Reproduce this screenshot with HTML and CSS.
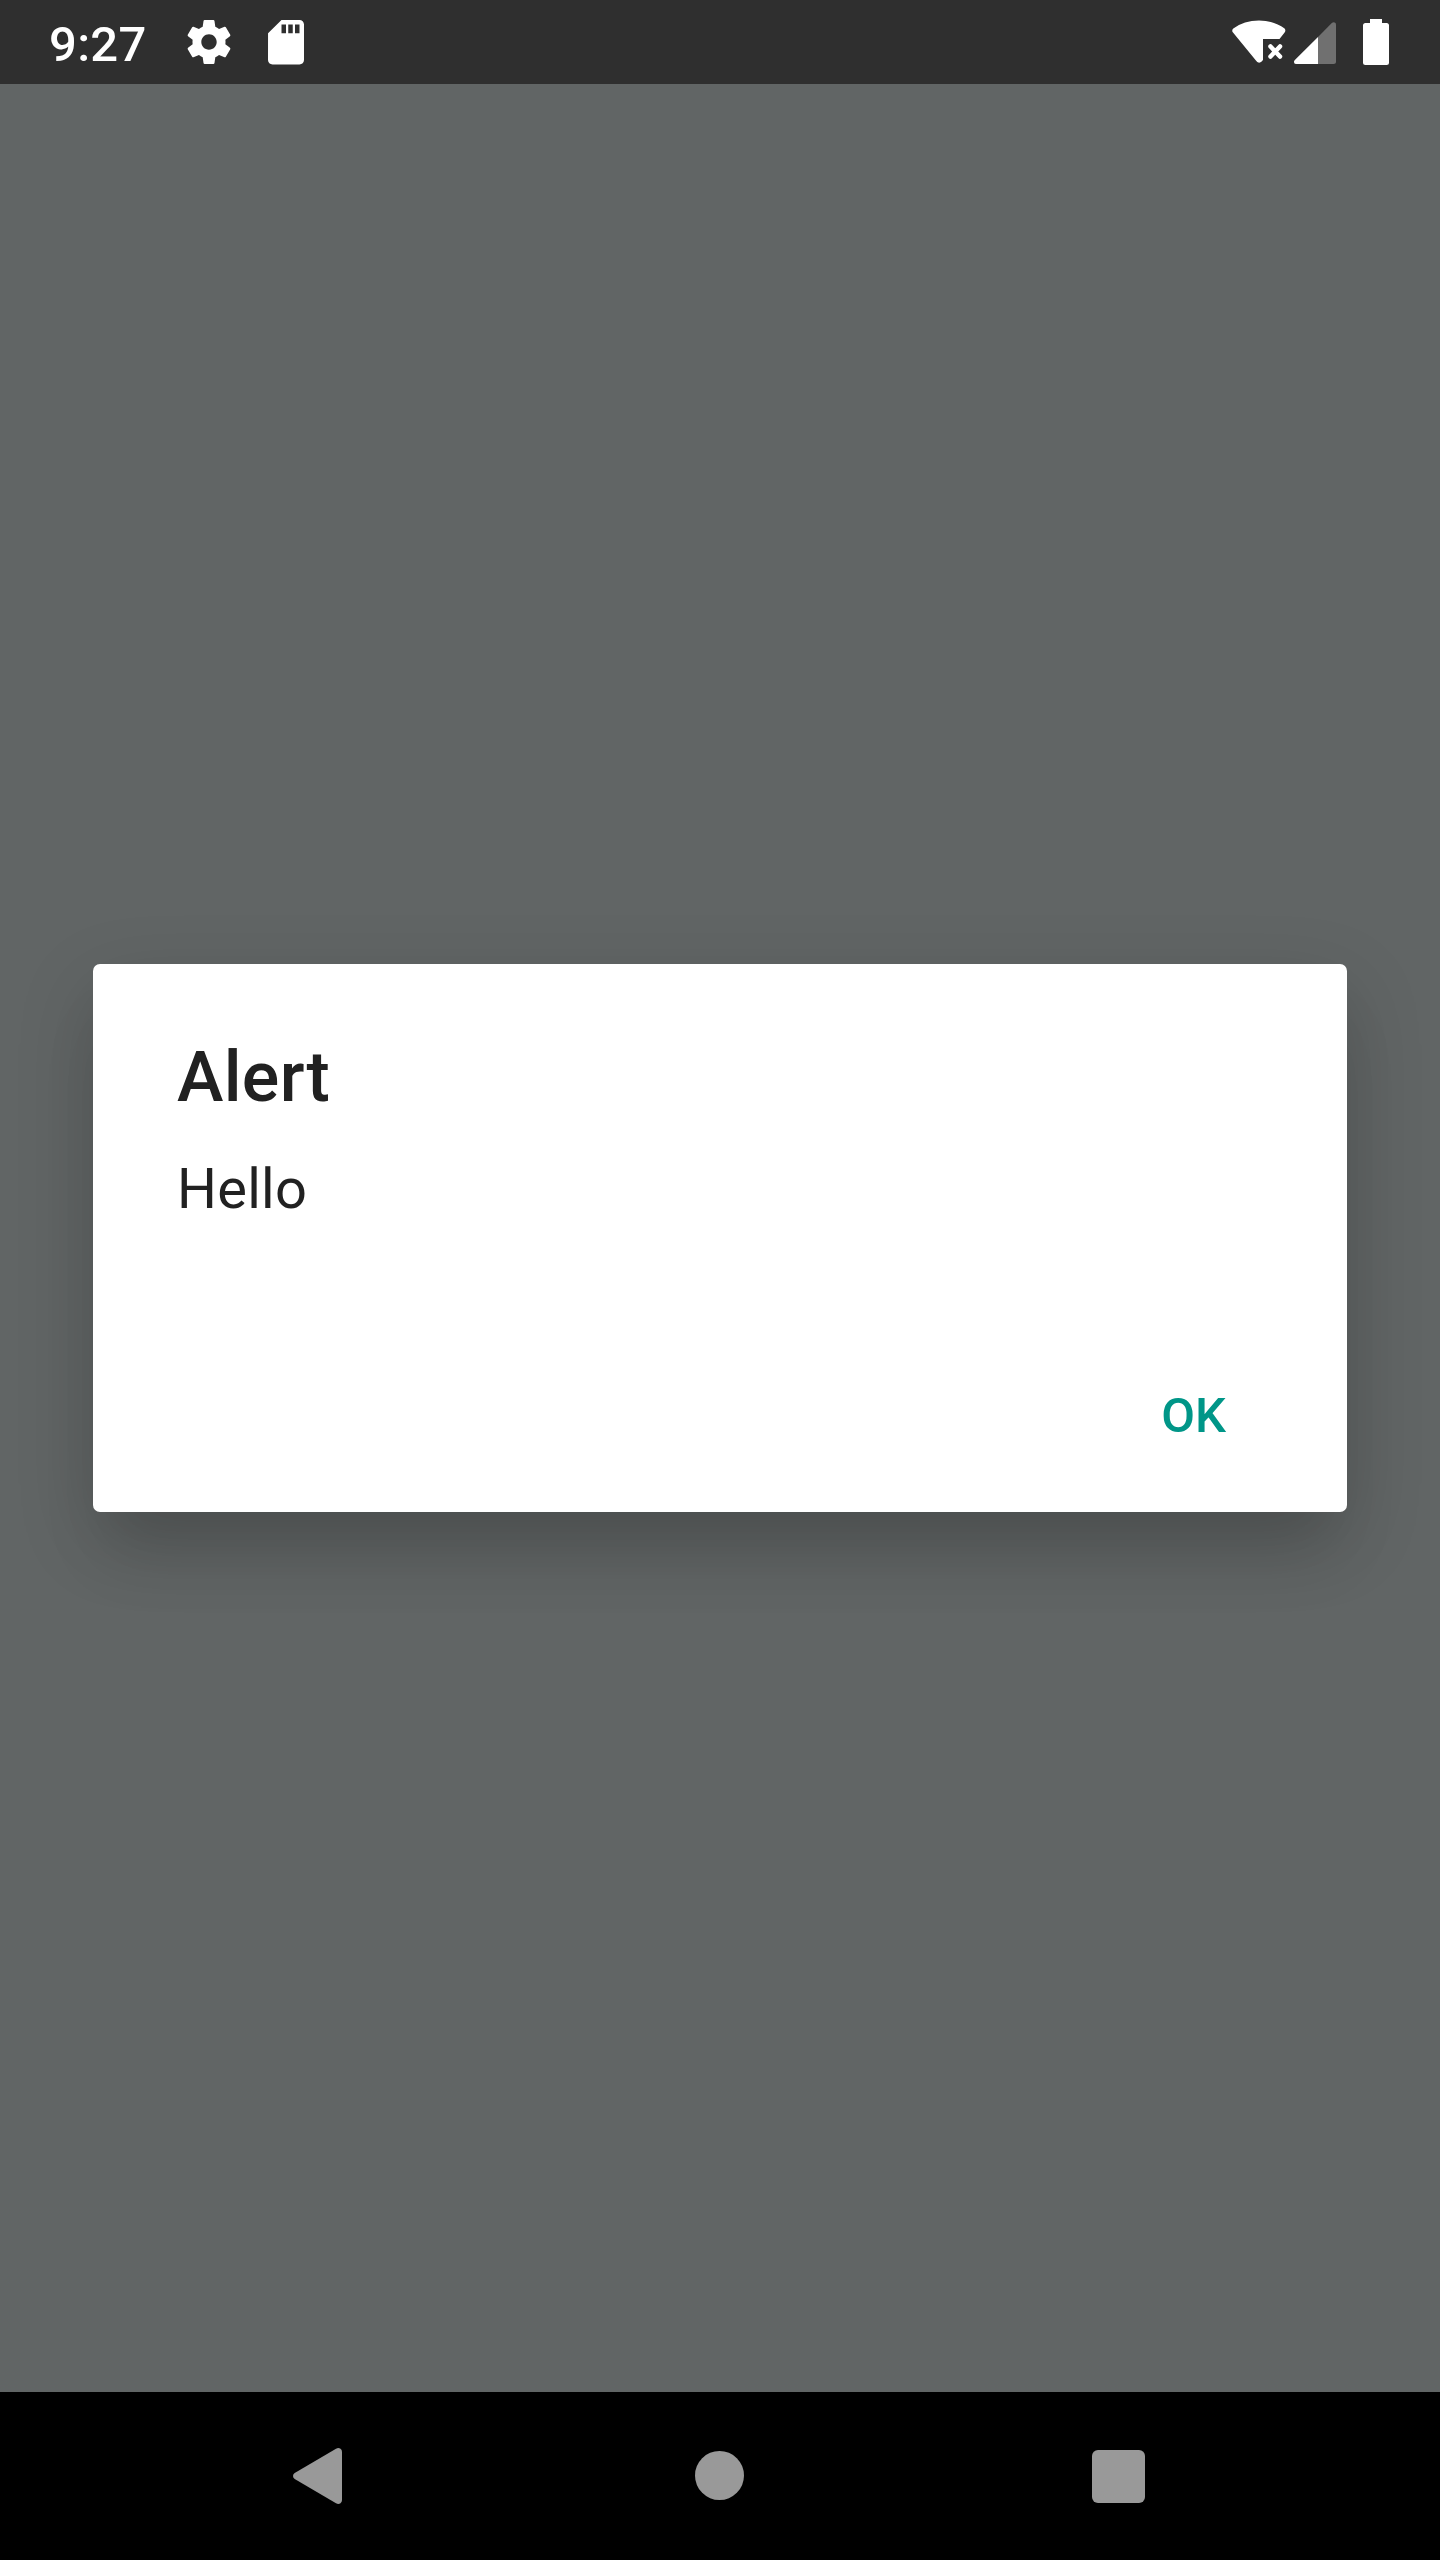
FILE: index.html
```html
<!DOCTYPE html>
<html lang="en">
<head>
<meta charset="utf-8">
<title>Alert</title>
<link rel="stylesheet" href="styles.css">
</head>
<body>
<div class="screen">
  <header class="status-bar">
    <span class="clock">9:27</span>
    <svg class="icon-settings" viewBox="2 2 20 20" width="44" height="44" fill="#fff"><path d="M19.43 12.98c.04-.32.07-.64.07-.98s-.03-.66-.07-.98l2.11-1.65c.19-.15.24-.42.12-.64l-2-3.46c-.12-.22-.39-.3-.61-.22l-2.49 1c-.52-.4-1.08-.73-1.69-.98l-.38-2.65C14.46 2.18 14.25 2 14 2h-4c-.25 0-.46.18-.49.42l-.38 2.65c-.61.25-1.17.59-1.69.98l-2.49-1c-.23-.09-.49 0-.61.22l-2 3.46c-.13.22-.07.49.12.64l2.11 1.65c-.04.32-.07.65-.07.98s.03.66.07.98l-2.11 1.65c-.19.15-.24.42-.12.64l2 3.46c.12.22.39.3.61.22l2.49-1c.52.4 1.08.73 1.69.98l.38 2.65c.03.24.24.42.49.42h4c.25 0 .46-.18.49-.42l.38-2.65c.61-.25 1.17-.59 1.69-.98l2.49 1c.23.09.49 0 .61-.22l2-3.46c.12-.22.07-.49-.12-.64l-2.11-1.65zM12 15.5c-1.93 0-3.5-1.57-3.5-3.5s1.57-3.5 3.5-3.5 3.5 1.57 3.5 3.5-1.57 3.5-3.5 3.5z"/></svg>
    <svg class="icon-card" viewBox="4 2 16 20" width="36" height="44.5" preserveAspectRatio="none" fill="#fff"><path d="M18 2h-8L4.020 8 4 20c0 1.100.9 2 2 2h12c1.100 0 2-.9 2-2V4c0-1.100-.9-2-2-2zm-6 6h-2V4h2v4zm3 0h-2V4h2v4zm3 0h-2V4h2v4z"/></svg>
    <svg class="icon-wifi" viewBox="0 0 54 44" width="54" height="44"><path fill="#fff" d="M1.300 8.500Q12 .5 27 .5T52.600 8.500Q54.100 10.500 52.600 12.500L47.500 19H31V40Q27 45.500 23.500 40L1 12.500Q-.7 10.500 1.300 8.500Z"/><path fill="none" stroke="#fff" stroke-width="4.500" stroke-linecap="round" d="M38.500 26.500 48 36.500M48 26.500 38.500 36.500"/></svg>
    <svg class="icon-signal" viewBox="0 0 42 42" width="42" height="42"><path fill="#707070" d="M24 15 37.800 1.100Q39.500-.5 41.200 .7Q42 1.300 42 3V39.500Q42 42 39.500 42H24Z"/><path fill="#fff" d="M24 15V42H2.500Q-.2 42 0 39.500Q0 38.700 1.100 37.700Z"/></svg>
    <svg class="icon-battery" viewBox="0 0 26 46" width="26" height="46"><path fill="#fff" d="M7 0H19V4H23.500Q26 4 26 6.500V43.500Q26 46 23.500 46H2.500Q0 46 0 43.500V6.500Q0 4 2.500 4H7Z"/></svg>
  </header>
  <main class="backdrop">
    <section class="dialog" role="alertdialog" aria-labelledby="title">
      <h1 class="dialog-title" id="title">Alert</h1>
      <p class="dialog-message">Hello</p>
      <div class="dialog-actions"><button class="dialog-button">OK</button></div>
    </section>
  </main>
  <nav class="nav-bar">
    <svg class="nav-back" viewBox="0 0 49 56" width="49" height="56"><path fill="#999" d="M43 .7Q45.500-.6 47.500 .8Q49 1.900 49 4V52Q49 54.100 47.500 55.200Q45.500 56.600 43 55.300L1.700 31Q0 29.800 0 28T1.700 25Z"/></svg>
    <svg class="nav-home" viewBox="0 0 49 49" width="49" height="49"><circle cx="24.500" cy="24.500" r="24.500" fill="#999"/></svg>
    <svg class="nav-recent" viewBox="0 0 53 53" width="53" height="53"><rect width="53" height="53" rx="6" fill="#999"/></svg>
  </nav>
</div>
</body>
</html>
```
FILE: styles.css
```css
* { box-sizing: border-box; }

body {
  margin: 0;
  font-family: Roboto, sans-serif;
}

.screen {
  display: flex;
  flex-direction: column;
  width: 1440px;
  height: 2560px;
  overflow: hidden;
  background: #616565;
}

.status-bar {
  display: flex;
  align-items: flex-start;
  height: 84px;
  padding: 19px 51px 0 49px;
  background: #2f2f2f;
}

.status-bar svg,
.nav-bar svg {
  display: block;
  flex: none;
}

.clock {
  width: 138px;
  color: #fff;
  font-size: 49px;
  font-weight: 500;
  line-height: 52px;
  letter-spacing: 0.3px;
}

.icon-settings { margin-top: 1px; }
.icon-card { margin: 1px 0 0 37px; }
.icon-wifi { margin: 1px 0 0 auto; }
.icon-signal { margin: 3px 0 0 8px; }
.icon-battery { margin-left: 27px; }

.backdrop {
  flex: 1;
  padding: 880px 93px 0;
}

.dialog {
  display: flex;
  flex-direction: column;
  height: 548px;
  padding: 72px 84px 67px;
  border-radius: 7px;
  background: #fff;
  box-shadow:
    0 26px 80px rgba(0, 0, 0, 0.16),
    0 52px 64px -14px rgba(0, 0, 0, 0.1);
  color: #212121;
}

.dialog-title {
  margin: 0;
  font-size: 70px;
  font-weight: 500;
  line-height: 82px;
  letter-spacing: 0.3px;
}

.dialog-message {
  margin: 38px 0 0;
  font-size: 56px;
  line-height: 66px;
  letter-spacing: 0.25px;
}

.dialog-actions {
  display: flex;
  justify-content: flex-end;
  margin-top: auto;
  padding-right: 37px;
}

.dialog-button {
  padding: 0;
  border: 0;
  background: none;
  color: #009688;
  font: 500 49px/58px Roboto, sans-serif;
}

.nav-bar {
  display: flex;
  align-items: center;
  height: 168px;
  padding-left: 293px;
  background: #000;
}

.nav-home { margin: 0 0 1px 353px; }
.nav-recent { margin-left: 347.5px; }
```
